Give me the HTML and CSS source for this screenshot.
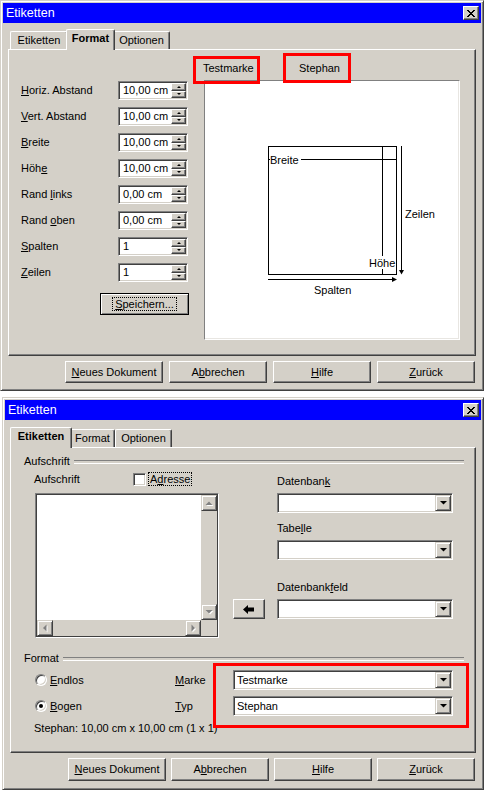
FILE: index.html
```html
<!DOCTYPE html>
<html><head><meta charset="utf-8"><title>Etiketten</title><link rel="stylesheet" href="styles.css"></head>
<body>
<div class="win w1">
  <div class="titlebar"><span class="title">Etiketten</span><span class="xbtn"><svg width="8" height="7" viewBox="0 0 8 7"><path d="M0 0h2v1H0zM6 0h2v1H6zM1 1h2v1H1zM5 1h2v1H5zM2 2h4v1H2zM3 3h2v1H3zM2 4h4v1H2zM1 5h2v1H1zM5 5h2v1H5zM0 6h2v1H0zM6 6h2v1H6z"/></svg></span></div>
  <div class="tabs">
    <div class="tab t-etik">Etiketten</div>
    <div class="tab t-form sel">Format</div>
    <div class="tab t-opt">Optionen</div>
  </div>
  <div class="panel p1">
    <div class="fmt-left">
      <div class="rows">
        <div class="frow"><span class="flabel"><u>H</u>oriz. Abstand</span><span class="spin"><span class="val">10,00 cm</span><span class="spinbtns"><i class="sb up"></i><i class="sb dn"></i></span></span></div>
        <div class="frow"><span class="flabel"><u>V</u>ert. Abstand</span><span class="spin"><span class="val">10,00 cm</span><span class="spinbtns"><i class="sb up"></i><i class="sb dn"></i></span></span></div>
        <div class="frow"><span class="flabel"><u>B</u>reite</span><span class="spin"><span class="val">10,00 cm</span><span class="spinbtns"><i class="sb up"></i><i class="sb dn"></i></span></span></div>
        <div class="frow"><span class="flabel">Höh<u>e</u></span><span class="spin"><span class="val">10,00 cm</span><span class="spinbtns"><i class="sb up"></i><i class="sb dn"></i></span></span></div>
        <div class="frow"><span class="flabel">Rand <u>l</u>inks</span><span class="spin"><span class="val">0,00 cm</span><span class="spinbtns"><i class="sb up"></i><i class="sb dn"></i></span></span></div>
        <div class="frow"><span class="flabel">Rand <u>o</u>ben</span><span class="spin"><span class="val">0,00 cm</span><span class="spinbtns"><i class="sb up"></i><i class="sb dn"></i></span></span></div>
        <div class="frow"><span class="flabel"><u>S</u>palten</span><span class="spin"><span class="val">1</span><span class="spinbtns"><i class="sb up"></i><i class="sb dn"></i></span></span></div>
        <div class="frow"><span class="flabel"><u>Z</u>eilen</span><span class="spin"><span class="val">1</span><span class="spinbtns"><i class="sb up"></i><i class="sb dn"></i></span></span></div>
      </div>
      <div class="btn def save"><span class="focus"><u>S</u>peichern...</span></div>
    </div>
    <div class="fmt-right">
      <div class="ptabs"><span class="ptab pt1">Testmarke</span><span class="ptab pt2">Stephan</span></div>
      <div class="preview">
        <svg class="draw" width="254" height="258" viewBox="0 0 254 258">
          <g stroke="#000" stroke-width="1" fill="none" shape-rendering="crispEdges">
            <rect x="63.5" y="65.5" width="128" height="128"/>
            <line x1="63" y1="78.5" x2="192" y2="78.5"/>
            <line x1="177.5" y1="65" x2="177.5" y2="194"/>
            <line x1="196.5" y1="65" x2="196.5" y2="189"/>
            <line x1="63" y1="198.5" x2="188" y2="198.5"/>
          </g>
          <polygon points="194,189 199,189 196.5,193.5" fill="#000"/>
          <polygon points="187,196 187,201 192,198.5" fill="#000"/>
          <rect x="65" y="73" width="31" height="11" fill="#fff"/>
          <text x="65" y="83">Breite</text>
          <rect x="163" y="175" width="27" height="13" fill="#fff"/>
          <text x="164" y="186">Höhe</text>
          <text x="200" y="137">Zeilen</text>
          <text x="109" y="213">Spalten</text>
        </svg>
      </div>
    </div>
  </div>
  <div class="btnrow r1">
    <div class="btn"><u>N</u>eues Dokument</div>
    <div class="btn">A<u>b</u>brechen</div>
    <div class="btn"><u>H</u>ilfe</div>
    <div class="btn"><u>Z</u>urück</div>
  </div>
  <div class="mark m1"></div>
  <div class="mark m2"></div>
</div>

<div class="win w2">
  <div class="titlebar"><span class="title">Etiketten</span><span class="xbtn"><svg width="8" height="7" viewBox="0 0 8 7"><path d="M0 0h2v1H0zM6 0h2v1H6zM1 1h2v1H1zM5 1h2v1H5zM2 2h4v1H2zM3 3h2v1H3zM2 4h4v1H2zM1 5h2v1H1zM5 5h2v1H5zM0 6h2v1H0zM6 6h2v1H6z"/></svg></span></div>
  <div class="tabs">
    <div class="tab t-etik sel">Etiketten</div>
    <div class="tab t-form">Format</div>
    <div class="tab t-opt">Optionen</div>
  </div>
  <div class="panel p2">
    <div class="fline"><span>Aufschrift</span></div>
    <div class="sec1">
      <div class="s1-left">
        <div class="s1-head"><span class="lab">Aufschrift</span><span class="chk"></span><span class="focus">A<u>d</u>resse</span></div>
        <div class="ta">
          <div class="ta-body"></div>
          <div class="vscroll">
            <span class="sbtn"><svg width="14" height="14" viewBox="0 0 14 14"><polygon points="4.5,10 11.5,10 8,6.5" fill="#fff"/><polygon points="3.5,9 10.5,9 7,5.5" fill="#808080"/></svg></span>
            <span class="track"></span>
            <span class="sbtn"><svg width="14" height="14" viewBox="0 0 14 14"><polygon points="4.5,6 11.5,6 8,9.5" fill="#fff"/><polygon points="3.5,5 10.5,5 7,8.5" fill="#808080"/></svg></span>
          </div>
          <div class="hscroll">
            <span class="sbtn"><svg width="14" height="14" viewBox="0 0 14 14"><polygon points="9.5,4.5 9.5,11.5 6,8" fill="#fff"/><polygon points="8.5,3.5 8.5,10.5 5,7" fill="#808080"/></svg></span>
            <span class="track"></span>
            <span class="sbtn"><svg width="14" height="14" viewBox="0 0 14 14"><polygon points="6.5,4.5 6.5,11.5 10,8" fill="#fff"/><polygon points="5.5,3.5 5.5,10.5 9,7" fill="#808080"/></svg></span>
          </div>
          <div class="corner"></div>
        </div>
      </div>
      <div class="btn arrowbtn"><svg width="12" height="9" viewBox="0 0 12 9"><path d="M0 4.5L5 0V2.5H11V6.5H5V9Z" fill="#000"/></svg></div>
      <div class="s1-right">
        <div class="lbl">Datenban<u>k</u></div>
        <div class="combo"><span class="ctext"></span><span class="dd"><svg width="7" height="4" viewBox="0 0 7 4"><polygon points="0,0 7,0 3.5,3.5"/></svg></span></div>
        <div class="lbl l2">Tabe<u>l</u>le</div>
        <div class="combo"><span class="ctext"></span><span class="dd"><svg width="7" height="4" viewBox="0 0 7 4"><polygon points="0,0 7,0 3.5,3.5"/></svg></span></div>
        <div class="lbl l3">Datenbank<u>f</u>eld</div>
        <div class="combo"><span class="ctext"></span><span class="dd"><svg width="7" height="4" viewBox="0 0 7 4"><polygon points="0,0 7,0 3.5,3.5"/></svg></span></div>
      </div>
    </div>
    <div class="fline f2"><span>Format</span></div>
    <div class="frow2">
      <span class="radio"></span><span class="rlabel"><u>E</u>ndlos</span>
      <span class="mlabel"><u>M</u>arke</span>
      <div class="combo wide"><span class="ctext">Testmarke</span><span class="dd"><svg width="7" height="4" viewBox="0 0 7 4"><polygon points="0,0 7,0 3.5,3.5"/></svg></span></div>
    </div>
    <div class="frow2 second">
      <span class="radio on"></span><span class="rlabel"><u>B</u>ogen</span>
      <span class="mlabel"><u>T</u>yp</span>
      <div class="combo wide"><span class="ctext">Stephan</span><span class="dd"><svg width="7" height="4" viewBox="0 0 7 4"><polygon points="0,0 7,0 3.5,3.5"/></svg></span></div>
    </div>
    <div class="info">Stephan: 10,00 cm x 10,00 cm (1 x 1)</div>
  </div>
  <div class="btnrow r2">
    <div class="btn"><u>N</u>eues Dokument</div>
    <div class="btn">A<u>b</u>brechen</div>
    <div class="btn"><u>H</u>ilfe</div>
    <div class="btn"><u>Z</u>urück</div>
  </div>
  <div class="mark m3"></div>
</div>
</body></html>
```
FILE: styles.css
```css
* { box-sizing: border-box; }
html, body { margin: 0; padding: 0; background: #fff; }
body {
  width: 484px; height: 792px; overflow: hidden;
  font-family: "Liberation Sans", Arial, sans-serif;
  font-size: 11px; line-height: 13px; color: #000;
}
u { text-decoration: underline; text-underline-offset: 1px; }
i { font-style: normal; }

/* window frame */
.win {
  position: relative;
  background: #d4d0c8;
  border: 1px solid;
  border-color: #d4d0c8 #404040 #404040 #d4d0c8;
  box-shadow: inset 1px 1px #fff, inset -1px -1px #808080;
  padding: 2px;
}
.w1 { width: 484px; height: 391px; }
.w2 { width: 482px; height: 393px; margin: 6px 0 0 2px; }

.titlebar {
  height: 20px; background: #0000ff;
  display: flex; align-items: center; justify-content: space-between;
  padding: 0 2px 0 3px;
}
.title { color: #fff; font-size: 12.5px; }
.xbtn {
  width: 16px; height: 14px; background: #d4d0c8;
  border: 1px solid; border-color: #fff #404040 #404040 #fff;
  box-shadow: inset -1px -1px #808080;
  display: flex; align-items: center; justify-content: center;
}
.xbtn svg { display: block; fill: #000; }

/* tabs */
.tabs { display: flex; align-items: flex-end; height: 20px; margin-top: 6px; padding-left: 7px; }
.w2 .tabs { margin-top: 7px; }
.tab {
  height: 18px; padding-top: 2px; text-align: center;
  background: #d4d0c8;
  border: 1px solid #fff; border-bottom: 0; border-right-color: #404040;
  box-shadow: inset -1px 0 #808080;
  border-radius: 2px 2px 0 0;
}
.t-etik { width: 58px; }
.t-form { width: 45px; }
.t-opt { width: 57px; }
.tab.sel {
  position: relative; z-index: 2;
  height: 21px; margin: 0 -2px -1px; font-weight: bold;
}
.t-etik.sel { width: 62px; }
.t-form.sel { width: 49px; }

/* panel */
.panel {
  margin: 0 5px;
  border: 1px solid; border-color: #fff #404040 #404040 #fff;
  box-shadow: inset -1px -1px #808080;
}
.p1 { height: 307px; display: flex; }
.p2 { height: 306px; }

/* format tab */
.fmt-left { width: 195px; padding: 31px 0 0 12px; }
.rows { display: flex; flex-direction: column; gap: 7px; }
.frow { display: flex; align-items: center; height: 19px; }
.flabel { width: 97px; }
.spin {
  width: 70px; height: 19px; display: flex; background: #fff;
  border: 1px solid; border-color: #808080 #fff #fff #808080;
  box-shadow: inset 1px 1px #404040, inset -1px -1px #d4d0c8;
  padding: 1px;
}
.val { flex: 1; padding-left: 3px; line-height: 15px; }
.spinbtns { width: 15px; display: flex; flex-direction: column; }
.sb {
  flex: 1; background: #d4d0c8;
  border: 1px solid; border-color: #fff #404040 #404040 #fff;
  box-shadow: inset -1px -1px #808080;
  display: flex; align-items: center; justify-content: center;
}
.sb::after { content: ""; width: 0; height: 0; border-left: 2px solid transparent; border-right: 2px solid transparent; }
.sb.up::after { border-bottom: 2px solid #000; }
.sb.dn::after { border-top: 2px solid #000; }

.btn {
  height: 22px; background: #d4d0c8;
  border: 1px solid; border-color: #fff #404040 #404040 #fff;
  box-shadow: inset -1px -1px #808080;
  display: flex; align-items: center; justify-content: center;
}
.btn.def { border-color: #000; box-shadow: inset 1px 1px #fff, inset -1px -1px #808080; }
.save { width: 89px; margin: 11px 0 0 79px; }
.focus { border: 1px dotted #000; padding: 0 2px; line-height: 12px; }

.fmt-right { width: 256px; }
.ptabs { height: 30px; display: flex; padding-top: 12px; }
.pt1 { width: 96px; margin-left: -1px; }
.preview {
  height: 260px; background: #fff;
  border: 1px solid; border-color: #808080 #fff #fff #808080;
  box-shadow: inset -1px -1px #e8e6e2;
}
.draw { display: block; }
.draw text { font-family: "Liberation Sans", Arial, sans-serif; font-size: 11px; fill: #000; }

.btnrow { display: flex; justify-content: flex-end; padding-right: 6px; margin-top: 5px; }
.r1 { gap: 6px; }
.r1 .btn { width: 98px; height: 22px; }
.r2 { gap: 5px; }
.r2 .btn { width: 98px; height: 23px; }

/* red annotation boxes */
.mark { position: absolute; border: 3px solid #ff0000; }
.m1 { left: 192px; top: 55px; width: 67px; height: 28px; }
.m2 { left: 282px; top: 52px; width: 68px; height: 30px; }
.m3 { left: 210px; top: 265px; width: 256px; height: 65px; }

/* etiketten tab */
.fline { display: flex; align-items: center; height: 13px; width: 440px; margin: 7px 0 0 13px; }
.fline::after {
  content: ""; flex: 1; height: 2px; margin-left: 4px;
  border-top: 1px solid #808080; border-bottom: 1px solid #fff;
}
.fline.f2 { margin-top: 14px; }

.sec1 { display: flex; align-items: flex-start; }
.s1-left { width: 184px; margin-left: 24px; }
.s1-head { display: flex; align-items: center; height: 16px; margin: 3px 0 0 -1px; }
.s1-head .lab { width: 99px; }
.s1-head .focus { margin-left: 2px; padding: 0 1px; }
.chk {
  width: 13px; height: 13px; background: #fff;
  border: 1px solid; border-color: #808080 #fff #fff #808080;
  box-shadow: inset 1px 1px #404040, inset -1px -1px #d4d0c8;
}
.ta {
  margin-top: 6px; height: 145px;
  display: grid; grid-template-columns: 1fr 16px; grid-template-rows: 1fr 16px;
  border: 1px solid; border-color: #808080 #fff #fff #808080;
  box-shadow: inset 0 0 0 1px #404040;
  padding: 1px;
}
.ta-body { background: #fff; }
.vscroll { display: flex; flex-direction: column; }
.hscroll { display: flex; }
.track { flex: 1; background: #d4d0c8; }
.corner { background: #d4d0c8; }
.sbtn {
  width: 16px; height: 16px; background: #d4d0c8;
  border: 1px solid; border-color: #d4d0c8 #404040 #404040 #d4d0c8;
  box-shadow: inset 1px 1px #fff, inset -1px -1px #808080;
}
.sbtn svg { display: block; }

.arrowbtn { width: 32px; height: 20px; margin: 131px 0 0 14px; }
.arrowbtn svg { display: block; }
.s1-right { width: 176px; margin-left: 12px; }
.lbl { margin-top: 7px; }
.lbl.l2 { margin-top: 9px; }
.lbl.l3 { margin-top: 21px; }
.combo {
  width: 176px; height: 20px; margin-top: 5px; display: flex; background: #fff;
  border: 1px solid; border-color: #808080 #fff #fff #808080;
  box-shadow: inset 1px 1px #404040, inset -1px -1px #d4d0c8;
  padding: 1px;
}
.ctext { flex: 1; line-height: 16px; padding-left: 2px; }
.dd {
  width: 16px; height: 16px; background: #d4d0c8;
  border: 1px solid; border-color: #d4d0c8 #404040 #404040 #d4d0c8;
  box-shadow: inset 1px 1px #fff, inset -1px -1px #808080;
  display: flex; align-items: center; justify-content: center;
}
.dd svg { display: block; fill: #000; }

.frow2 { display: flex; align-items: center; height: 20px; margin: 5px 0 0 24px; }
.frow2.second { margin-top: 6px; }
.radio {
  width: 12px; height: 12px; border-radius: 50%; background: #fff;
  border: 1px solid; border-color: #808080 #fff #fff #808080;
  box-shadow: inset 1px 1px #404040, inset -1px -1px #d4d0c8;
  display: flex; align-items: center; justify-content: center;
}
.radio.on::after { content: ""; width: 4px; height: 4px; border-radius: 50%; background: #000; }
.rlabel { width: 125px; margin-left: 3px; }
.mlabel { width: 58px; }
.combo.wide { width: 220px; margin-top: 0; }
.info { margin: 6px 0 0 23px; }
```
